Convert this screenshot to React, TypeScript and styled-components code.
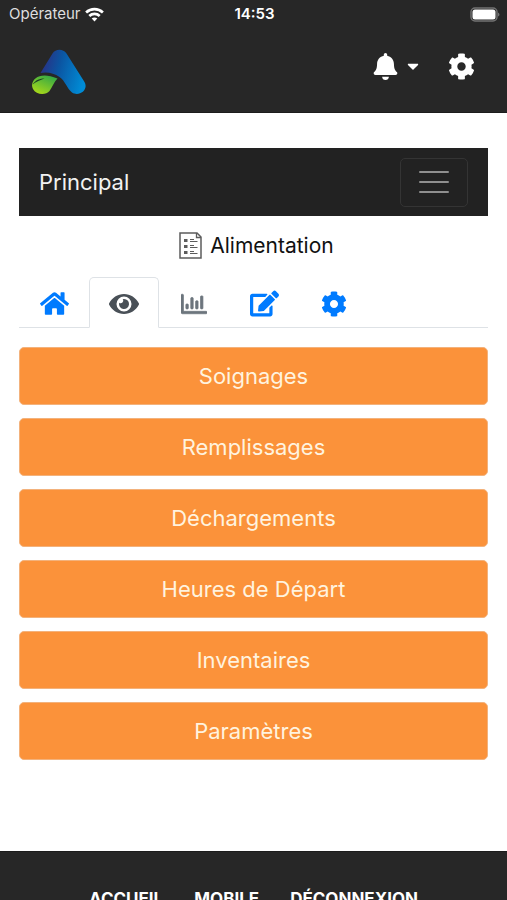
import React from "react";
import styled, { createGlobalStyle } from "styled-components";
import { FaBell, FaCaretDown, FaCog, FaEdit, FaEye, FaHome, FaRegChartBar } from "react-icons/fa";

const GlobalStyle = createGlobalStyle`
  *, *::before, *::after { box-sizing: border-box; }
  html { scrollbar-width: none; }
  body {
    margin: 0;
    background: #fff;
    color: #111;
    font-family: Inter, "Liberation Sans", sans-serif;
  }
  button { font: inherit; cursor: pointer; }
`;

const Page = styled.div`
  display: flex;
  flex-direction: column;
  min-height: 100vh;
`;

const TopArea = styled.header`
  background: #272727;
  color: #fff;
  border-bottom: 1px solid #1c1c1c;
`;

const StatusBar = styled.div`
  display: grid;
  grid-template-columns: 1fr auto 1fr;
  align-items: center;
  height: 28px;
  padding: 0 7px 0 9px;
  font-size: 15px;
  line-height: 20px;
`;

const Carrier = styled.span`
  display: flex;
  align-items: center;
  gap: 4px;
  color: #dedede;
`;

const Clock = styled.time`
  font-weight: 600;
`;

const BatterySlot = styled.span`
  display: flex;
  justify-content: flex-end;
`;

const AppBar = styled.div`
  display: flex;
  align-items: center;
  justify-content: space-between;
  height: 84px;
  padding: 0 32px;
`;

const LogoLink = styled.a`
  display: flex;
  padding-top: 4px;
`;

const Actions = styled.div`
  display: flex;
  align-items: center;
  gap: 26px;
  padding-bottom: 8px;
`;

const IconButton = styled.button`
  display: flex;
  align-items: center;
  gap: 5px;
  padding: 0;
  border: 0;
  background: none;
  color: #fff;
`;

const Main = styled.main`
  flex: 1;
  padding: 35px 19px 91px;
`;

const NavBar = styled.nav`
  display: flex;
  align-items: center;
  justify-content: space-between;
  height: 68px;
  padding: 0 20px;
  background: #222;
`;

const Brand = styled.a`
  color: #f2f2f2;
  font-size: 22px;
  line-height: 32px;
  text-decoration: none;
`;

const Toggler = styled.button`
  display: flex;
  align-items: center;
  justify-content: center;
  width: 68px;
  height: 49px;
  padding: 0;
  border: 1px solid #343434;
  border-radius: 5px;
  background: transparent;
  color: #8f8f8f;
`;

const Title = styled.h1`
  display: flex;
  align-items: center;
  justify-content: center;
  gap: 8px;
  height: 61px;
  margin: 0;
  padding: 0 0 3px 6px;
  font-size: 21px;
  font-weight: 400;
`;

const Tabs = styled.div`
  display: flex;
  height: 51px;
  border-bottom: 1px solid #dee2e6;
`;

const Tab = styled.button<{ $active?: boolean; $muted?: boolean }>`
  display: flex;
  align-items: center;
  justify-content: center;
  width: 70px;
  height: 51px;
  padding: 2px 0 0;
  border: 1px solid ${(p) => (p.$active ? "#dee2e6" : "transparent")};
  border-bottom-color: ${(p) => (p.$active ? "#fff" : "transparent")};
  border-radius: 5px 5px 0 0;
  background: ${(p) => (p.$active ? "#fff" : "transparent")};
  color: ${(p) => (p.$active ? "#495057" : p.$muted ? "#6c757d" : "#007bff")};
`;

const Menu = styled.div`
  display: flex;
  flex-direction: column;
  gap: 13px;
  padding-top: 19px;
`;

const MenuButton = styled.button`
  width: 100%;
  height: 58px;
  padding: 0;
  border: 1px solid #f3b27c;
  border-radius: 5px;
  background: #fb923a;
  color: #fff3df;
  font-size: 22px;
  line-height: 32px;
`;

const Footer = styled.footer`
  display: flex;
  justify-content: center;
  gap: 31px;
  padding: 37px 16px 40px;
  border-top: 1px solid #1c1c1c;
  background: #272727;
`;

const FooterLink = styled.a`
  color: #fff;
  font-size: 17px;
  font-weight: 700;
  line-height: 20px;
  text-decoration: none;
`;

const Wifi = () => (
  <svg width="19" height="15" viewBox="0 0 19 15" fill="none" stroke="#fff" strokeWidth="2.7" aria-label="Wi-Fi">
    <path d="M1.1 5.4C5.9.9 13.1.9 17.9 5.4" />
    <path d="M4.3 9C7.3 6.2 11.7 6.2 14.7 9" />
    <path d="M9.5 14.4 6.7 11.5C8.3 10 10.7 10 12.3 11.5Z" fill="#fff" stroke="none" />
  </svg>
);

const Battery = () => (
  <svg width="31" height="15" viewBox="0 0 31 15" aria-label="Batterie">
    <rect x="2" y="1" width="26" height="13" rx="4" fill="#272727" stroke="#737373" strokeWidth="1.4" />
    <rect x="3.500" y="2.500" width="23" height="10" rx="2.500" fill="#fff" />
    <path d="M29 5.400c2 .8 2 3.400 0 4.200Z" fill="#737373" />
  </svg>
);

const Logo = () => (
  <svg width="54" height="46" viewBox="0 0 54 46" aria-hidden="true">
    <defs>
      <linearGradient id="peak" x1="8" y1="18" x2="52" y2="30" gradientUnits="userSpaceOnUse">
        <stop offset="0" stopColor="#2b2f83" />
        <stop offset=".4" stopColor="#0b55a2" />
        <stop offset="1" stopColor="#008bd5" />
      </linearGradient>
      <linearGradient id="leaf" x1="16" y1="26" x2="8" y2="45" gradientUnits="userSpaceOnUse">
        <stop offset="0" stopColor="#36a944" />
        <stop offset="1" stopColor="#a5d71b" />
      </linearGradient>
    </defs>
    <path
      d="M8.500 24 20.500 4.500C23.500-.3 31-.5 34.500 4.500L52.500 33C57 41 47 48 40 43.500 35 39.500 33 31.500 27.500 28 22 24 15 22.500 8.500 24Z"
      fill="url(#peak)"
    />
    <path
      d="M0 36C1 28 10 23 25.500 29.500 22 33 20.500 38 17.500 42 14 46.500 4 46 1 40Q0 38 0 36Z"
      fill="url(#leaf)"
    />
    <path d="M.500 35.500C3.500 31 8 29.500 12.500 29.500 8 31 4.500 32.500 .500 35.500Z" fill="#1c3d25" />
  </svg>
);

const Checklist = () => (
  <svg width="23" height="27" viewBox="0 0 23 27" fill="none" stroke="#5c5c5c" aria-hidden="true">
    <path d="M1 1H18L22 5V26H1Z" strokeWidth="1.500" />
    <path d="M17.500 1V5.500H22" strokeWidth="1.300" />
    <path d="M5 8.500H8.500M5 14.500H8.500M5 20.500H8.500" strokeWidth="3" />
    <path d="M11 7.500H15M11 9.500H18.500M11 13.500H15M11 15.500H18.500M11 19.500H15M11 21.500H18.500" strokeWidth="1.200" />
  </svg>
);

const Bars = () => (
  <svg width="30" height="22" viewBox="0 0 30 22" stroke="currentColor" strokeWidth="2" strokeLinecap="round" aria-hidden="true">
    <path d="M1 1H29M1 11H29M1 21H29" />
  </svg>
);

const tabs = [
  { label: "Accueil", icon: <FaHome size={29} /> },
  { label: "Affichage", icon: <FaEye size={30} />, active: true },
  { label: "Graphiques", icon: <FaRegChartBar size={26} strokeWidth={14} />, muted: true },
  { label: "Modifier", icon: <FaEdit size={29} /> },
  { label: "Réglages", icon: <FaCog size={26} /> },
];

const entries = ["Soignages", "Remplissages", "Déchargements", "Heures de Départ", "Inventaires", "Paramètres"];

const footerLinks = ["ACCUEIL", "MOBILE", "DÉCONNEXION"];

export default function App() {
  return (
    <>
      <GlobalStyle />
      <Page>
        <TopArea>
          <StatusBar>
            <Carrier>
              Opérateur
              <Wifi />
            </Carrier>
            <Clock>14:53</Clock>
            <BatterySlot>
              <Battery />
            </BatterySlot>
          </StatusBar>
          <AppBar>
            <LogoLink href="#" aria-label="Accueil">
              <Logo />
            </LogoLink>
            <Actions>
              <IconButton aria-label="Notifications">
                <FaBell size={27} />
                <FaCaretDown size={18} />
              </IconButton>
              <IconButton aria-label="Paramètres du compte">
                <FaCog size={27} />
              </IconButton>
            </Actions>
          </AppBar>
        </TopArea>
        <Main>
          <NavBar>
            <Brand href="#">Principal</Brand>
            <Toggler aria-label="Ouvrir le menu">
              <Bars />
            </Toggler>
          </NavBar>
          <Title>
            <Checklist />
            Alimentation
          </Title>
          <Tabs role="tablist">
            {tabs.map((t) => (
              <Tab key={t.label} role="tab" aria-label={t.label} aria-selected={!!t.active} $active={t.active} $muted={t.muted}>
                {t.icon}
              </Tab>
            ))}
          </Tabs>
          <Menu>
            {entries.map((e) => (
              <MenuButton key={e}>{e}</MenuButton>
            ))}
          </Menu>
        </Main>
        <Footer>
          {footerLinks.map((l) => (
            <FooterLink key={l} href="#">
              {l}
            </FooterLink>
          ))}
        </Footer>
      </Page>
    </>
  );
}
